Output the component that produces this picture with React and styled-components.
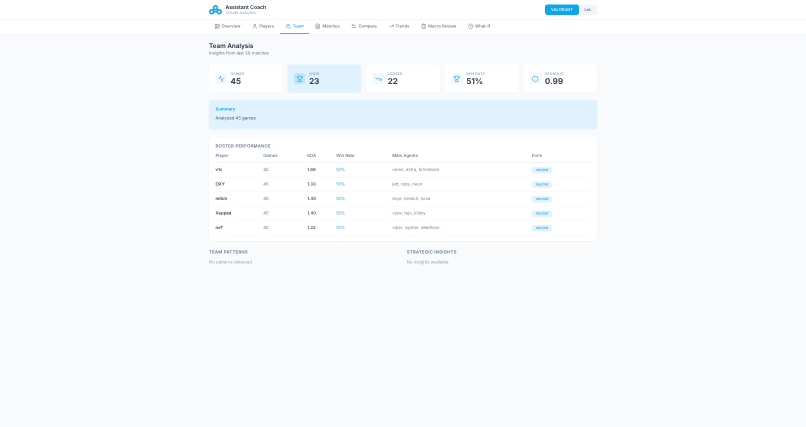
import React from "react";
import styled, { createGlobalStyle } from "styled-components";
import { LayoutDashboard, User, Users, FileText, ArrowLeftRight, TrendingUp, ClipboardList, CircleHelp, Activity, Trophy, TrendingDown, Circle } from "lucide-react";

const Global = createGlobalStyle`
  html, body { margin: 0; padding: 0; background: #f8fafc; }
  body { font-family: Inter, "Liberation Sans", sans-serif; color: #1e293b; text-rendering: geometricPrecision; }
  * { box-sizing: border-box; }
`;
const Viewport = styled.div`width: 806px; height: 427px; overflow: hidden;`;
const Page = styled.div`
  width: 1612px; height: 854px; background: #f8fafc;
  transform: scale(0.5); transform-origin: 0 0; will-change: transform; filter: blur(0.5px);
`;
const Header = styled.header`
  height: 39px; background: #fff; border-bottom: 1px solid #e9eef4;
  padding: 0 418px; display: flex; align-items: center; justify-content: space-between;
`;
const Brand = styled.div`display: flex; align-items: center; gap: 7px; padding-top: 1px;`;
const BrandText = styled.div`display: flex; flex-direction: column;`;
const BrandTitle = styled.div`font-size: 10.3px; font-weight: 600; line-height: 12px; color: #1e293b;`;
const BrandSub = styled.div`font-size: 7.6px; line-height: 9px; color: #94a3b8;`;
const Toggle = styled.div`display: flex; height: 21px; background: #f1f5f9; border-radius: 5px;`;
const ToggleBtn = styled.div`
  display: flex; align-items: center; justify-content: center;
  width: ${p => p.$w}px; border-radius: 5px; font-size: 8px; font-weight: 600;
  background: ${p => (p.$active ? "#0ea5e9" : "transparent")};
  color: ${p => (p.$active ? "#e0f2fe" : "#64748b")};
`;
const Nav = styled.nav`
  height: 30px; background: #fff; border-bottom: 1px solid #e9eef4;
  padding: 0 418px; display: flex; gap: 2px;
`;
const Tab = styled.div`
  display: flex; align-items: center; gap: 3.5px; padding: 0 10.5px; height: 29px;
  font-size: 8.4px; font-weight: 500;
  color: ${p => (p.$active ? "#0ea5e9" : "#64748b")};
  border-bottom: 2px solid ${p => (p.$active ? "#38bdf8" : "transparent")};
`;
const Main = styled.main`padding: 14px 418px 0; display: flex; flex-direction: column;`;
const Title = styled.h1`margin: 0; font-size: 12.6px; line-height: 19px; font-weight: 600; color: #1e293b;`;
const Subtitle = styled.p`margin: 0; font-size: 8.6px; line-height: 11px; color: #64748b;`;
const Stats = styled.div`display: grid; grid-template-columns: repeat(5, 1fr); gap: 10px; margin-top: 16px;`;
const StatCard = styled.div`
  height: 56px; border-radius: 5px; display: flex; align-items: center; gap: 8px; padding: 0 13px;
  background: ${p => (p.$hl ? "#e0f2fe" : "#fff")};
  box-shadow: 0 1px 3px rgba(15, 23, 42, 0.05);
`;
const StatIcon = styled.div`
  width: 22px; height: 22px; border-radius: 5px; display: flex; align-items: center; justify-content: center;
  background: ${p => (p.$hl ? "#bae6fd" : "#f0f7fd")}; color: #38a9dc;
`;
const StatText = styled.div`display: flex; flex-direction: column;`;
const StatLabel = styled.div`font-size: 7.4px; line-height: 10px; color: #94a3b8; font-weight: 500; letter-spacing: 0.2px;`;
const StatValue = styled.div`font-size: 16px; line-height: 19px; font-weight: 700; color: #334155;`;
const Summary = styled.section`
  margin-top: 15px; height: 58px; background: #e0f2fe; border-radius: 5px; padding: 13px;
  box-shadow: 0 1px 3px rgba(15, 23, 42, 0.05);
`;
const SummaryTitle = styled.div`font-size: 8.6px; line-height: 12px; font-weight: 600; color: #0ea5e9;`;
const SummaryText = styled.div`margin-top: 6px; font-size: 8.6px; line-height: 12px; color: #475569;`;
const Roster = styled.section`
  margin-top: 16px; height: 208px; background: #fff; border-radius: 5px; padding: 13px;
  box-shadow: 0 1px 3px rgba(15, 23, 42, 0.06);
`;
const SectionTitle = styled.div`font-size: 8.7px; line-height: 12px; font-weight: 600; letter-spacing: 0.4px; color: #64748b;`;
const Row = styled.div`
  display: grid; grid-template-columns: 95.4px 88px 58px 112px 279px 1fr; align-items: center;
  height: ${p => (p.$head ? 27 : 29)}px; border-bottom: 1px solid ${p => (p.$head ? "#e2e8f0" : "#f1f5f9")};
  font-size: 8.6px;
`;
const Th = styled.div`color: #64748b; font-weight: 500;`;
const Name = styled.div`font-weight: 600; color: #334155;`;
const Cell = styled.div`color: #64748b;`;
const Kda = styled.div`font-weight: 600; color: #475569;`;
const Rate = styled.div`color: #38a9dc; font-weight: 500;`;
const Agents = styled.div`color: #7a879a;`;
const Badge = styled.span`
  justify-self: start; display: inline-block; padding: 1.5px 8px; border-radius: 8px;
  background: #e0f2fe; color: #3aa8dc; font-size: 7.6px; line-height: 10px; font-weight: 500;
`;
const Columns = styled.div`display: grid; grid-template-columns: 1fr 1fr; gap: 15px; margin-top: 17px;`;
const ColTitle = styled.div`font-size: 8.7px; line-height: 12px; font-weight: 600; letter-spacing: 0.4px; color: #64748b;`;
const ColText = styled.div`margin-top: 8px; font-size: 8.6px; line-height: 12px; color: #94a3b8;`;

const Logo = () => (
  <svg width="26" height="20" viewBox="0 0 26 20" fill="none" stroke="#0ea5e9" strokeWidth="3.2">
    <circle cx="13" cy="5.5" r="3.8" />
    <circle cx="5.5" cy="13.5" r="3.8" />
    <circle cx="20.5" cy="13.5" r="3.8" />
    <path d="M9.5 13.5h7M10.5 8.5l-2.5 2.5M15.5 8.5l2.5 2.5" />
  </svg>
);

const tabs = [
  ["Overview", LayoutDashboard], ["Players", User], ["Team", Users], ["Matches", FileText],
  ["Compare", ArrowLeftRight], ["Trends", TrendingUp], ["Macro Review", ClipboardList], ["What-If", CircleHelp],
];
const stats = [
  ["GAMES", "45", Activity], ["WINS", "23", Trophy, true], ["LOSSES", "22", TrendingDown],
  ["WIN RATE", "51%", Trophy], ["TEAM K/D", "0.99", Circle],
];
const players = [
  ["v1c", "1.69", "omen, astra, brimstone"], ["OXY", "1.33", "jett, raze, neon"],
  ["mitch", "1.48", "skye, breach, sova"], ["Xeppaa", "1.40", "vyse, tejo, killjoy"],
  ["neT", "1.22", "viper, cypher, deadlock"],
];

export default function App() {
  return (
    <Viewport>
      <Global />
      <Page>
        <Header>
          <Brand>
            <Logo />
            <BrandText>
              <BrandTitle>Assistant Coach</BrandTitle>
              <BrandSub>Cloud9 Analytics</BrandSub>
            </BrandText>
          </Brand>
          <Toggle>
            <ToggleBtn $active $w={68}>VALORANT</ToggleBtn>
            <ToggleBtn $w={36}>LoL</ToggleBtn>
          </Toggle>
        </Header>
        <Nav>
          {tabs.map(([label, Icon]) => (
            <Tab key={label} $active={label === "Team"}>
              <Icon size={11} strokeWidth={2} />
              {label}
            </Tab>
          ))}
        </Nav>
        <Main>
          <Title>Team Analysis</Title>
          <Subtitle>Insights from last 30 matches</Subtitle>
          <Stats>
            {stats.map(([label, value, Icon, hl]) => (
              <StatCard key={label} $hl={hl}>
                <StatIcon $hl={hl}><Icon size={13} strokeWidth={2} /></StatIcon>
                <StatText>
                  <StatLabel>{label}</StatLabel>
                  <StatValue>{value}</StatValue>
                </StatText>
              </StatCard>
            ))}
          </Stats>
          <Summary>
            <SummaryTitle>Summary</SummaryTitle>
            <SummaryText>Analyzed 45 games</SummaryText>
          </Summary>
          <Roster>
            <SectionTitle>ROSTER PERFORMANCE</SectionTitle>
            <Row $head>
              <Th>Player</Th><Th>Games</Th><Th>KDA</Th><Th>Win Rate</Th><Th>Main Agents</Th><Th>Form</Th>
            </Row>
            {players.map(([name, kda, agents]) => (
              <Row key={name}>
                <Name>{name}</Name>
                <Cell>45</Cell>
                <Kda>{kda}</Kda>
                <Rate>51%</Rate>
                <Agents>{agents}</Agents>
                <Badge>neutral</Badge>
              </Row>
            ))}
          </Roster>
          <Columns>
            <div>
              <ColTitle>TEAM PATTERNS</ColTitle>
              <ColText>No patterns detected</ColText>
            </div>
            <div>
              <ColTitle>STRATEGIC INSIGHTS</ColTitle>
              <ColText>No insights available</ColText>
            </div>
          </Columns>
        </Main>
      </Page>
    </Viewport>
  );
}
